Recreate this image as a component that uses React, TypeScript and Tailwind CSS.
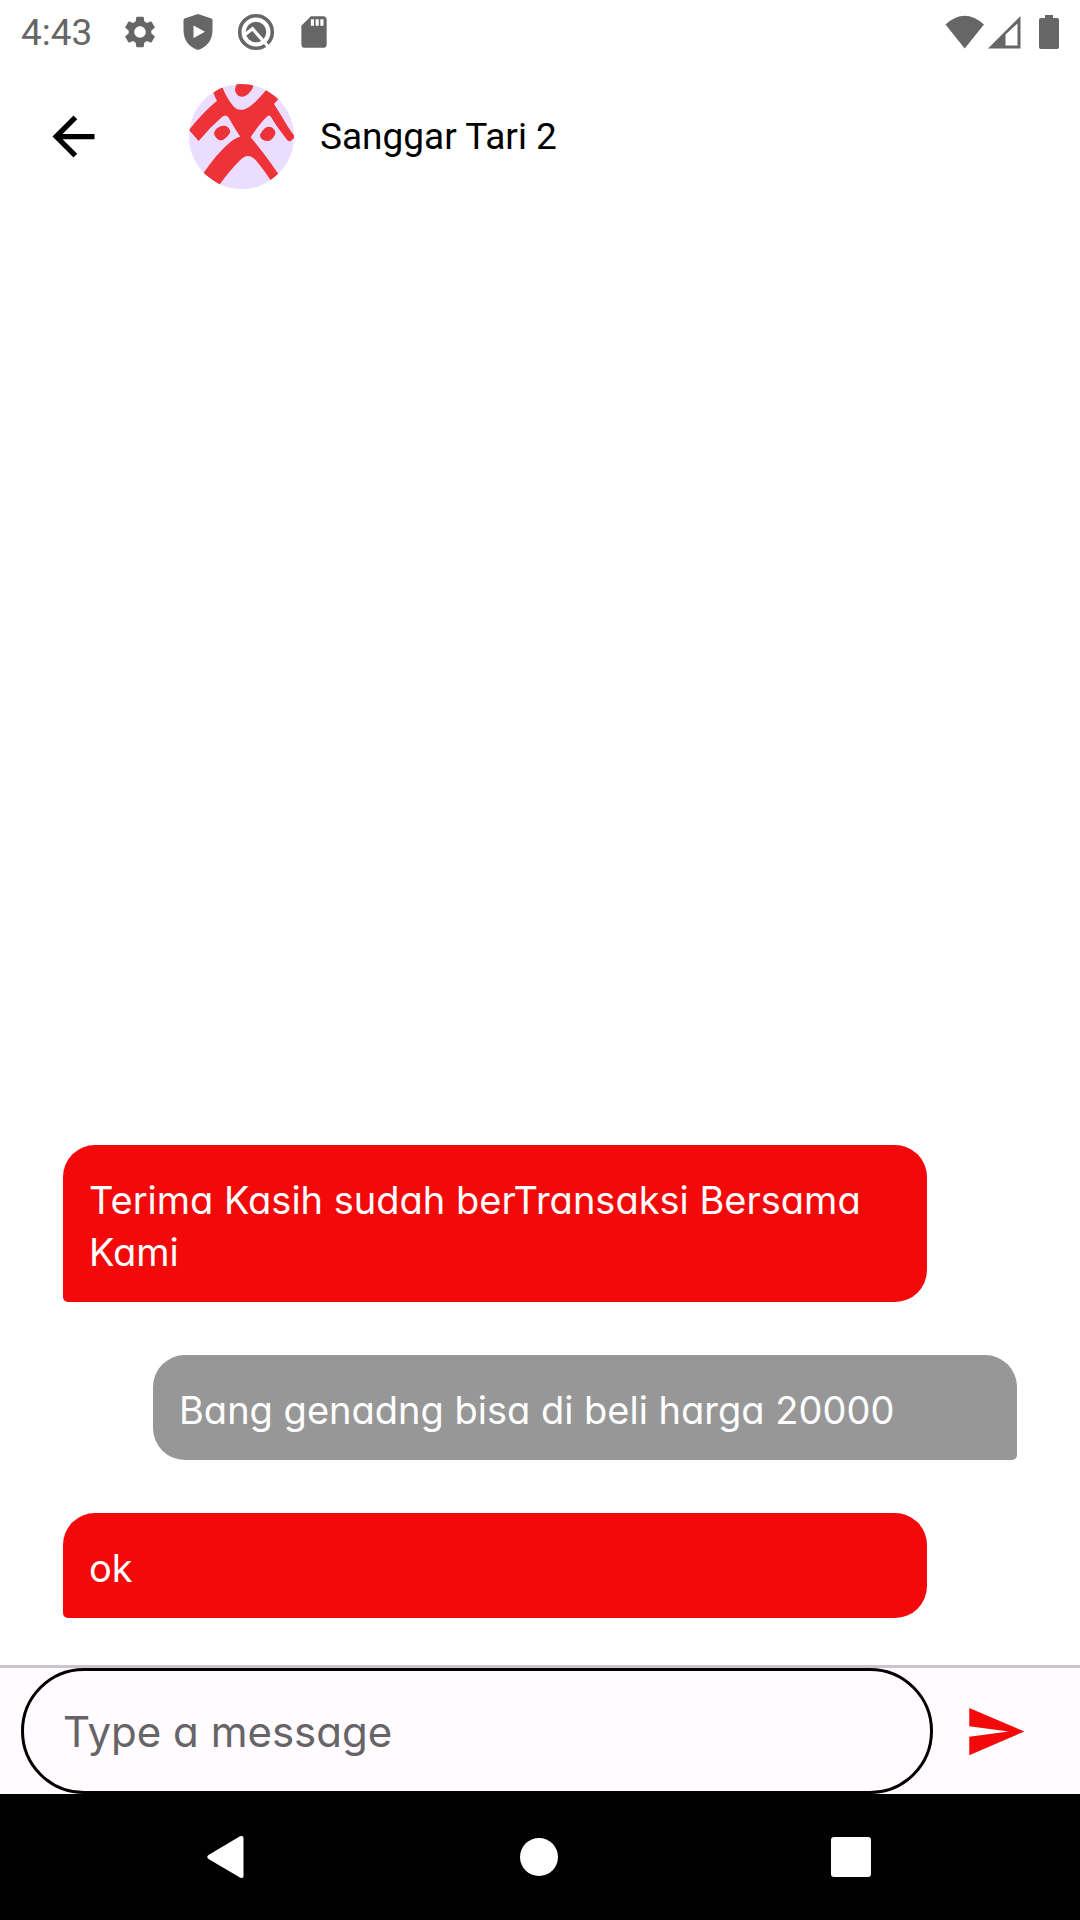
import React from "react";
import { MdArrowBack, MdSdCard, MdSend, MdSettings } from "react-icons/md";

type Message = { id: number; text: string; mine: boolean };

const messages: Message[] = [
  { id: 1, text: "Terima Kasih sudah berTransaksi Bersama Kami", mine: false },
  { id: 2, text: "Bang genadng bisa di beli harga 20000", mine: true },
  { id: 3, text: "ok", mine: false },
];

function ShieldIcon() {
  return (
    <svg viewBox="0 0 38 38" className="size-[38px]" fill="currentColor" aria-hidden="true">
      <path
        fillRule="evenodd"
        d="M19 1 L32.500 5.500 Q33.500 6 33.500 7 V17 C33.500 27 28 34 19 37 C10 34 4.500 27 4.500 17 V7 Q4.500 6 5.500 5.500 Z M14.500 12.500 V25 L26 18.700 Z"
      />
    </svg>
  );
}

function CircleQIcon() {
  return (
    <svg viewBox="0 0 38 38" className="size-[38px]" aria-hidden="true">
      <circle cx="19" cy="19" r="16.300" fill="none" stroke="currentColor" strokeWidth="3.600" />
      <circle cx="19" cy="19" r="10.300" fill="currentColor" />
      <path d="M7.500 22 L15.500 15.800 L32 34.500" fill="none" stroke="#fff" strokeWidth="3.200" />
    </svg>
  );
}

function StatusBar() {
  return (
    <div className="flex h-16 items-center justify-between pr-5 pl-[21px] text-[#666666]">
      <div className="flex items-center gap-[29px]">
        <span className="text-[37px] leading-none">4:43</span>
        <div className="flex items-center gap-5">
          <MdSettings className="size-[38px]" aria-hidden="true" />
          <ShieldIcon />
          <CircleQIcon />
          <MdSdCard className="size-[38px]" aria-hidden="true" />
        </div>
      </div>
      <div className="flex items-center">
        <svg viewBox="0 0 40 34" className="h-[34px] w-10" fill="currentColor" aria-hidden="true">
          <path d="M0.500 9.500 Q19.500 -8 39 9.500 L19.700 33.500 Z" />
        </svg>
        <svg viewBox="0 0 34 34" className="ml-[3px] h-[34px] w-[34px]" fill="currentColor" aria-hidden="true">
          <path fillRule="evenodd" d="M0 33.500 L32.500 1 V33.500 Z M17.500 19.500 V30.500 H29.500 V8.500 Z" />
        </svg>
        <svg viewBox="0 0 22 36" className="ml-4 h-9 w-[22px]" fill="currentColor" aria-hidden="true">
          <path d="M7 1 H15 V4 H19 Q21 4 21 6 V33 Q21 35 19 35 H3 Q1 35 1 33 V6 Q1 4 3 4 H7 Z" />
        </svg>
      </div>
    </div>
  );
}

function Avatar() {
  return (
    <svg
      viewBox="57 42 315 315"
      className="size-[105px] rounded-full bg-[#eaddff]"
      fill="#ee3338"
      role="img"
      aria-label="Sanggar Tari 2"
    >
      <path d="M195 58 Q196 44 206 38 H246 Q253 48 245 60 Q236 72 226 78 Q212 84 202 75 Q195 68 195 58 Z" />
      <path d="M130 68 L156 48 C164 72 182 100 193 112 Q206 124 226 117 C250 106 270 82 288 60 L326 86 L312 102 L340 147 Q360 183 376 200 L362 213 Q355 216 349 207 L320 168 L303 141 Q299 133 292 139 Q268 162 242 202 Q280 246 325 312 L302 331 Q282 300 260 274 Q236 244 211 270 Q180 300 148 345 L100 310 Q140 250 182 215 Q200 201 211 200 Q199 184 177 145 Q169 130 156 141 Q120 172 86 213 L57 180 Q95 130 141 92 Q136 84 130 68 Z" />
      <path d="M132 190 Q134 178 147 171 Q160 164 172 170 Q182 178 180 188 Q174 200 160 209 Q150 214 142 207 Q132 199 132 190 Z" />
      <path d="M270 194 Q274 184 285 174 Q297 167 307 173 Q317 181 316 191 Q311 205 298 212 Q285 215 275 207 Q269 201 270 194 Z" />
    </svg>
  );
}

function Bubble({ message }: { message: Message }) {
  return (
    <li
      className={
        message.mine
          ? "ml-[90px] rounded-[32px] rounded-br-[5px] bg-[#979797] px-[26px] pt-[29px] pb-6"
          : "mr-[90px] rounded-[32px] rounded-bl-[5px] bg-[#f30909] px-[26px] pt-[29px] pb-6"
      }
    >
      <p className="text-[38px] leading-[52px] text-white">{message.text}</p>
    </li>
  );
}

export default function App() {
  return (
    <div className="flex min-h-screen flex-col bg-white font-['Roboto',sans-serif]">
      <StatusBar />
      <header className="flex items-center pt-5 pl-[42px]">
        <button type="button" aria-label="Back" className="text-black">
          <MdArrowBack className="size-[63px]" />
        </button>
        <div className="ml-[84px] flex items-center gap-[26px]">
          <Avatar />
          <h1 className="text-[37px] text-black">Sanggar Tari 2</h1>
        </div>
      </header>

      <main className="flex flex-1 flex-col justify-end px-[63px] pb-[47px] font-['Inter',sans-serif] [font-feature-settings:'cv11']">
        <ul className="flex flex-col gap-[53px]">
          {messages.map((m) => (
            <Bubble key={m.id} message={m} />
          ))}
        </ul>
      </main>

      <form
        onSubmit={(e) => e.preventDefault()}
        className="flex items-center border-t-[3px] border-[#cac4d0] bg-[#fffbff] pr-[53px] pl-[21px]"
      >
        <input
          type="text"
          aria-label="Message"
          placeholder="Type a message"
          className="h-[126px] min-w-0 flex-1 rounded-full border-[3px] border-black bg-transparent px-[39px] font-['Inter',sans-serif] text-[42px] text-black outline-none [font-feature-settings:'cv11'] placeholder:text-[#666467]"
        />
        <button type="submit" aria-label="Send" className="ml-[31px] text-[#f30909]">
          <MdSend className="size-[63px]" />
        </button>
      </form>

      <nav className="flex h-[126px] items-center justify-between bg-black pr-[209px] pl-[207px] text-white">
        <button type="button" aria-label="System back">
          <svg viewBox="0 0 40 44" className="h-11 w-10" fill="currentColor">
            <path d="M33 1.300 Q36.500 0 36.500 3 V41 Q36.500 44 33 42.500 L1.500 24 Q-1 22 1.500 20 Z" />
          </svg>
        </button>
        <button type="button" aria-label="Home" className="flex w-10 justify-center">
          <span className="size-[38px] rounded-full bg-white" />
        </button>
        <button type="button" aria-label="Recent apps">
          <span className="block size-10 rounded-[3px] bg-white" />
        </button>
      </nav>
    </div>
  );
}
